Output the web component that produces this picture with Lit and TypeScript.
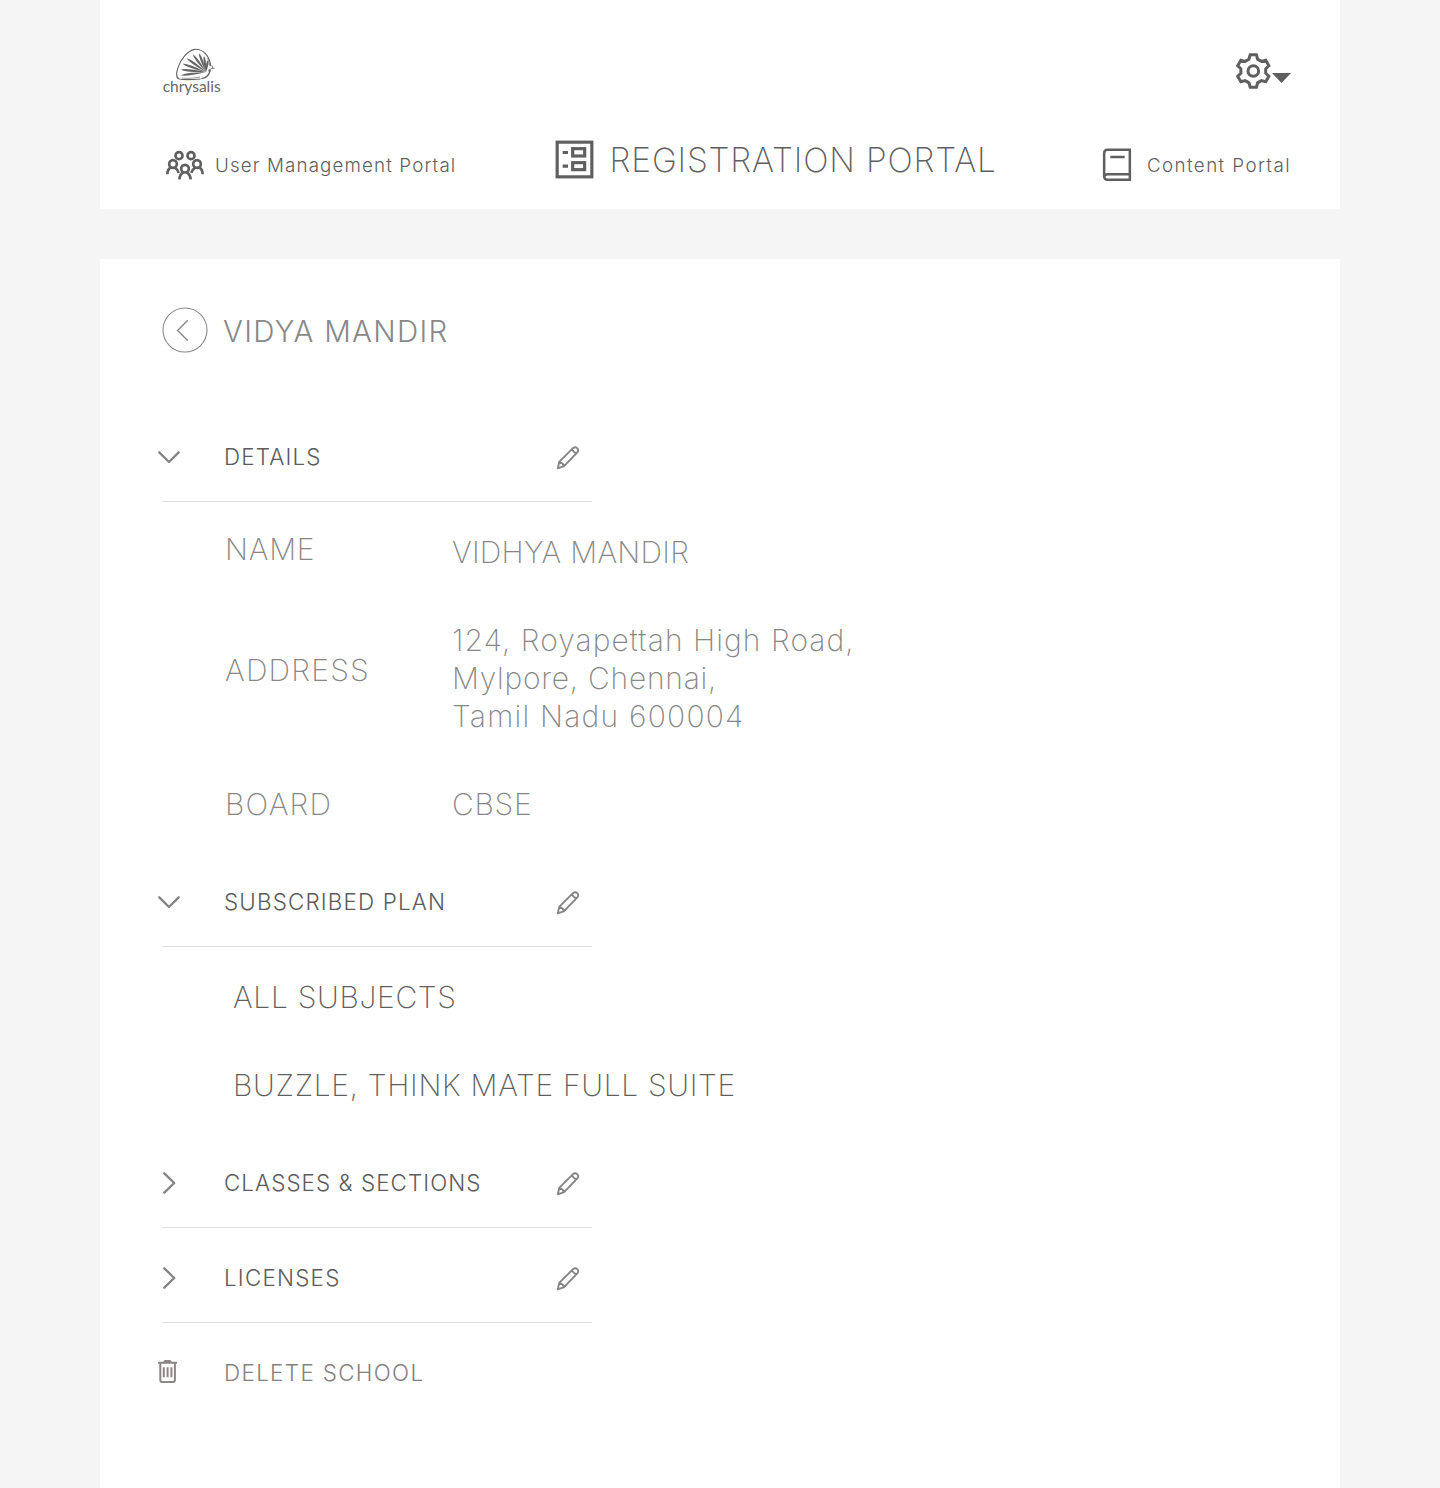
import { LitElement, html, svg, css, nothing } from "lit";
import { customElement, property } from "lit/decorators.js";

const gearPath = (): string => {
  const points: string[] = [];
  for (let tooth = 0; tooth < 6; tooth++) {
    const steps: [number, number][] = [[12.6, -20], [16.5, -11], [16.5, 11], [12.6, 20]];
    for (const [radius, offset] of steps) {
      const angle = ((tooth * 60 - 90 + offset) * Math.PI) / 180;
      points.push(`${(18.3 + radius * Math.cos(angle)).toFixed(2)} ${(18 + radius * Math.sin(angle)).toFixed(2)}`);
    }
  }
  return `M${points.join("L")}Z`;
};

const featherTips: [number, number][] = [
  [92, 118], [92, 101], [98, 83], [110, 67], [128, 55], [147, 52], [162, 60], [174, 72],
];

const feather = ([x, y]: [number, number]): string => {
  const fx = 168;
  const fy = 108;
  const dx = x - fx;
  const dy = y - fy;
  const len = Math.hypot(dx, dy);
  const nx = (-dy / len) * 7;
  const ny = (dx / len) * 7;
  const mx = fx + dx * 0.8;
  const my = fy + dy * 0.8;
  return `M${fx} ${fy}Q${mx + nx} ${my + ny} ${x} ${y}Q${mx - nx} ${my - ny} ${fx} ${fy}Z`;
};

@customElement("ui-icon")
class UiIcon extends LitElement {
  @property() name = "";

  static styles = css`
    :host { display: block; flex: none; line-height: 0; }
    svg { display: block; fill: none; stroke: currentColor; overflow: visible; }
    .solid { fill: currentColor; stroke: none; }
    .wordmark { fill: currentColor; stroke: none; font: 400 47px Lato, "Liberation Sans", sans-serif; }
  `;

  render() {
    switch (this.name) {
      case "logo":
        return html`<svg width="64" height="50" viewBox="30 30 192 150">
          <path stroke-width="3.5" d="M152 129C128 131 100 132 88 129C78 126 78 112 84 95C92 70 112 44 134 40C160 38 180 62 182 91"/>
          <path stroke-width="2" d="M150 123C130 127 108 128 96 126M172 65C177 74 179 82 179 90"/>
          ${featherTips.map((tip) => svg`<path class="solid" d=${feather(tip)} />`)}
          <path stroke-width="4" d="M154 128C166 126 176 120 179 108"/>
          <circle class="solid" cx="179" cy="104" r="4"/>
          <path stroke-width="2.5" d="M182 99L188 97L186 88M187 97L194 96"/>
          <text class="wordmark" x="38" y="168" textLength="174" lengthAdjust="spacingAndGlyphs">chrysalis</text>
        </svg>`;
      case "gear":
        return html`<svg width="36" height="36" viewBox="0 0 36 36">
          <path stroke-width="3" stroke-linejoin="miter" d=${gearPath()} />
          <circle cx="18.3" cy="18" r="5.3" stroke-width="3"/>
        </svg>`;
      case "caret":
        return html`<svg width="20" height="10" viewBox="0 0 20 10"><path class="solid" d="M1 0H20L10.500 10Z"/></svg>`;
      case "users":
        return html`<svg width="38" height="30" viewBox="48 60 114 90" stroke-width="8">
          <circle cx="87" cy="77" r="10.5"/><circle cx="123" cy="77" r="10.5"/>
          <circle cx="69" cy="102" r="11.5"/><circle cx="141" cy="102" r="11.5"/>
          <circle cx="105" cy="116" r="11.5"/>
          <path d="M52 133C52 122 57 115 64 112M74 112C80 116 84 121 86 129M158 133C158 122 153 115 146 112M136 112C130 116 126 121 124 129M88 148C89 137 93 131 99 127M122 148C121 137 117 131 111 127"/>
        </svg>`;
      case "form":
        return html`<svg width="39" height="39" viewBox="45 45 117 117" stroke-width="9.5">
          <rect x="51.5" y="51.5" width="104" height="104"/>
          <rect x="98" y="71" width="36" height="22"/><rect x="98" y="113" width="36" height="21"/>
          <path d="M68 82.5H84M68 123.5H84"/>
        </svg>`;
      case "book":
        return html`<svg width="28" height="34" viewBox="42 39 84 102" stroke-width="7.5">
          <path d="M122.500 44.500H56Q45.500 44.500 45.500 55V124Q45.500 134.500 56 134.500H122.500ZM45.500 126Q46 117.500 56 117.500H122.500"/>
          <path d="M64 66H107"/>
        </svg>`;
      case "back":
        return html`<svg width="46" height="46" viewBox="0 0 46 46">
          <circle cx="23" cy="23" r="22" stroke-width="1.1"/>
          <path stroke-width="1.4" d="M25.800 13.300L15.600 23.500L25.800 33.700"/>
        </svg>`;
      case "down":
        return html`<svg width="24" height="24" viewBox="0 0 24 24"><path stroke-width="2.4" stroke-linecap="round" stroke-linejoin="round" d="M2.300 7.300L12 17L21.700 7.300"/></svg>`;
      case "right":
        return html`<svg width="24" height="24" viewBox="0 0 24 24"><path stroke-width="2.4" stroke-linecap="round" stroke-linejoin="round" d="M7.300 2.300L17.200 12L7.300 21.700"/></svg>`;
      case "pencil":
        return html`<svg width="24" height="24" viewBox="0 0 24 24" stroke-width="1.900" stroke-linejoin="round" stroke-linecap="round">
          <path d="M1.900 22.300L3.200 15.900L17 2.200C18.200 1 20 1 21.200 2.100C22.500 3.300 22.500 5.100 21.300 6.300L8.100 20.100L1.900 22.300ZM3.200 15.900C5.500 16.400 7.300 17.700 8.100 20.100M16 3.600C17.200 5.600 18.300 6.500 20 7.300"/>
        </svg>`;
      case "trash":
        return html`<svg width="20" height="24" viewBox="0 0 20 24" stroke-width="2">
          <path d="M1 2.700H20M7.100 2.400L8 1.100H13L13.900 2.400M3.300 3V20Q3.300 22.100 5.400 22.100H15.800Q17.900 22.100 17.900 20V3M6.800 7.200V17.300M10.600 7.200V17.300M14.400 7.200V17.300"/>
        </svg>`;
      default:
        return nothing;
    }
  }
}

@customElement("section-bar")
class SectionBar extends LitElement {
  @property() icon = "right";
  @property({ type: Boolean }) danger = false;

  static styles = css`
    :host { display: block; }
    .bar { box-sizing: border-box; height: 89px; width: 430px; display: flex; align-items: center; border-bottom: 1px solid #dfdfdf; }
    .danger { border-color: transparent; }
    .lead { margin-left: -5px; width: 67px; color: #858585; }
    .label { flex: 1; font-size: 22.4px; line-height: 30px; font-weight: 340; color: #5c5c5c; white-space: nowrap; }
    .danger .label { color: #858282; }
    .danger .lead { color: #8c8787; margin-bottom: 2px; }
    .edit { color: #858585; margin: 2px 12px 0 0; }
  `;

  render() {
    return html`<div class="bar ${this.danger ? "danger" : ""}">
      <div class="lead"><ui-icon name=${this.icon}></ui-icon></div>
      <div class="label"><slot></slot></div>
      ${this.danger ? nothing : html`<ui-icon class="edit" name="pencil"></ui-icon>`}
    </div>`;
  }
}

@customElement("app-root")
class AppRoot extends LitElement {
  static styles = css`
    :host { display: block; font-family: Inter, "Liberation Sans", sans-serif; color: #5f5f5f; }
    .page { box-sizing: border-box; min-height: 1488px; padding: 0 100px; background: #f5f5f5; display: flex; flex-direction: column; gap: 50px; }
    header { box-sizing: border-box; height: 209px; background: #fff; padding: 46px 49px 0 60px; }
    .top { display: flex; justify-content: space-between; height: 94px; }
    .logo { color: #666; }
    .settings { display: flex; height: 36px; margin-top: 7px; }
    .caret { margin: 20px 0 0 0; }
    nav { display: flex; margin-left: 6px; height: 40px; align-items: center; }
    .portal { display: flex; align-items: center; white-space: nowrap; font-size: 18.8px; font-weight: 350; line-height: 26px; margin-top: 10px; }
    .portal span { margin-top: 2px; }
    .users { width: 389px; gap: 11px; letter-spacing: 1.12px; }
    .content { gap: 16px; letter-spacing: 1.4px; }
    .current { width: 549px; gap: 16px; margin-top: -1px; font-size: 33.5px; font-weight: 220; line-height: 40px; letter-spacing: 0.82px; }
    .current span { margin-top: 1px; }
    main { box-sizing: border-box; flex: 1; background: #fff; padding: 49px 62px 0; display: flex; flex-direction: column; }
    .title { display: flex; align-items: center; gap: 15px; height: 46px; margin-bottom: 59px; color: #898989; font-size: 29.5px; line-height: 38px; font-weight: 345; letter-spacing: 1.3px; }
    .title ui-icon { margin: -2px 0 0 0; }
    .title span { margin-top: -1px; }
    .details { box-sizing: border-box; height: 356px; padding: 31px 0 0 63px; display: flex; flex-direction: column; gap: 50px; font-size: 30px; font-weight: 210; color: #878787; }
    .row { display: flex; align-items: center; white-space: nowrap; }
    .key { width: 227px; line-height: 32px; }
    .value { line-height: 38px; }
    .raise-s { margin-bottom: 6px; }
    .raise-m { margin-bottom: 16px; }
    .plans { box-sizing: border-box; height: 192px; padding: 31px 0 0 71px; display: flex; flex-direction: column; gap: 50px; font-size: 30px; line-height: 38px; font-weight: 220; }
    .w2 { letter-spacing: 0.25px; }
    .w6 { letter-spacing: 0.68px; }
    .w7 { letter-spacing: 0.75px; }
    .w10 { letter-spacing: 1.06px; }
    .w11 { letter-spacing: 1.16px; }
    .w12 { letter-spacing: 1.22px; }
    .w13 { letter-spacing: 1.35px; }
    .stack { display: flex; flex-direction: column; gap: 6px; }
  `;

  render() {
    return html`<div class="page">
      <header>
        <div class="top">
          <ui-icon class="logo" name="logo"></ui-icon>
          <div class="settings"><ui-icon name="gear"></ui-icon><ui-icon class="caret" name="caret"></ui-icon></div>
        </div>
        <nav>
          <div class="portal users"><ui-icon name="users"></ui-icon><span>User Management Portal</span></div>
          <div class="portal current"><ui-icon name="form"></ui-icon><span>REGISTRATION PORTAL</span></div>
          <div class="portal content"><ui-icon name="book"></ui-icon><span>Content Portal</span></div>
        </nav>
      </header>
      <main>
        <div class="title"><ui-icon name="back"></ui-icon><span>VIDYA MANDIR</span></div>
        <section-bar icon="down"><span class="w11">DETAILS</span></section-bar>
        <div class="details">
          <div class="row"><div class="key raise-s w7">NAME</div><div class="value w2">VIDHYA MANDIR</div></div>
          <div class="row"><div class="key raise-m w12">ADDRESS</div>
            <div class="value">
              <div class="w10">124, Royapettah High Road,</div>
              <div class="w7">Mylpore, Chennai,</div>
              <div class="w12">Tamil Nadu 600004</div>
            </div>
          </div>
          <div class="row"><div class="key w12">BOARD</div><div class="value w7">CBSE</div></div>
        </div>
        <section-bar icon="down"><span class="w11">SUBSCRIBED PLAN</span></section-bar>
        <div class="plans"><div class="w6">ALL SUBJECTS</div><div class="w6">BUZZLE, THINK MATE FULL SUITE</div></div>
        <div class="stack">
          <section-bar icon="right"><span class="w10">CLASSES &amp; SECTIONS</span></section-bar>
          <section-bar icon="right"><span class="w12">LICENSES</span></section-bar>
          <section-bar icon="trash" danger><span class="w13">DELETE SCHOOL</span></section-bar>
        </div>
      </main>
    </div>`;
  }
}
